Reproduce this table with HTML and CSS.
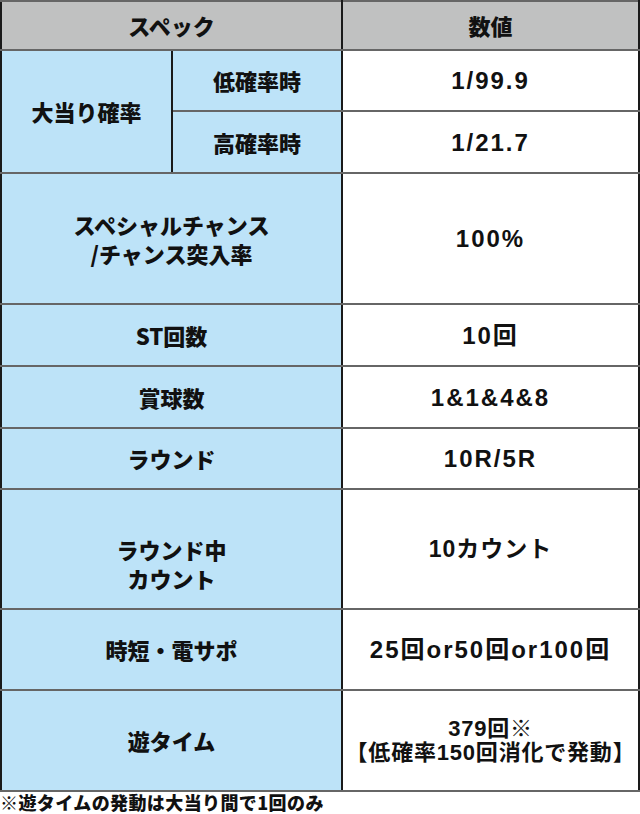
FILE: index.html
```html
<!DOCTYPE html>
<html lang="ja">
<head>
<meta charset="utf-8">
<link rel="stylesheet" href="styles.css">
</head>
<body>
<table class="spec">
  <colgroup><col class="c1"><col class="c2"><col class="c3"></colgroup>
  <tr class="r-head"><th colspan="2">スペック</th><th>数値</th></tr>
  <tr class="r1"><td rowspan="2" class="lbl">大当り確率</td><td class="lbl">低確率時</td><td class="val num">1/99.9</td></tr>
  <tr class="r2"><td class="lbl">高確率時</td><td class="val num">1/21.7</td></tr>
  <tr class="r3"><td colspan="2" class="lbl">スペシャルチャンス<br>/チャンス突入率</td><td class="val num">100%</td></tr>
  <tr class="r4"><td colspan="2" class="lbl">ST回数</td><td class="val num">10回</td></tr>
  <tr class="r5"><td colspan="2" class="lbl">賞球数</td><td class="val num">1&amp;1&amp;4&amp;8</td></tr>
  <tr class="r6"><td colspan="2" class="lbl">ラウンド</td><td class="val num">10R/5R</td></tr>
  <tr class="r7"><td colspan="2" class="lbl low">ラウンド中<br>カウント</td><td class="val num mid">10カウント</td></tr>
  <tr class="r8"><td colspan="2" class="lbl">時短・電サポ</td><td class="val num">25回or50回or100回</td></tr>
  <tr class="r9"><td colspan="2" class="lbl">遊タイム</td><td class="val num tight">379回※<br>【低確率150回消化で発動】</td></tr>
</table>
<p class="note">※遊タイムの発動は大当り間で1回のみ</p>
</body>
</html>
```
FILE: styles.css
```css
html, body {
  margin: 0;
  padding: 0;
  background: #ffffff;
}
body {
  width: 640px;
  font-family: "Noto Sans CJK JP", "Noto Sans", sans-serif;
  font-weight: 900;
  color: #111;
}
.spec {
  border-collapse: collapse;
  width: 638px;
  table-layout: fixed;
  border: 2px solid #333;
}
.c1 { width: 171px; }
.c2 { width: 170px; }
.c3 { width: 297px; }
.spec th, .spec td {
  border-top: 2px solid #666;
  border-bottom: 2px solid #666;
  border-left: 2px solid #1a1a1a;
  border-right: 2px solid #1a1a1a;
  text-align: center;
  vertical-align: middle;
  padding: 0;
  font-size: 22px;
  line-height: 29px;
  font-weight: 900;
}
.spec th {
  background: #c0c1c1;
}
.lbl {
  background: #bde3f8;
}
.val {
  background: #fff;
}
.spec .num {
  font-family: "Liberation Sans", "Noto Sans CJK JP", sans-serif;
  font-weight: 700;
  font-size: 24px;
  letter-spacing: 2px;
}
.spec .mid { font-size: 23px; letter-spacing: 1px; }
.spec .tight { line-height: 24px; font-size: 22px; letter-spacing: 0.8px; }
.spec .low { padding-top: 30px; }
.r-head { height: 49px; }
.r1 { height: 61px; }
.r2 { height: 62px; }
.r3 { height: 131px; }
.r4 { height: 62px; }
.r5 { height: 62px; }
.r6 { height: 61px; }
.r7 { height: 120px; }
.r8 { height: 81px; }
.r9 { height: 101px; }
.note {
  margin: 1px 0 0 0;
  font-size: 18px;
  line-height: 19px;
  letter-spacing: 0.4px;
}
```
